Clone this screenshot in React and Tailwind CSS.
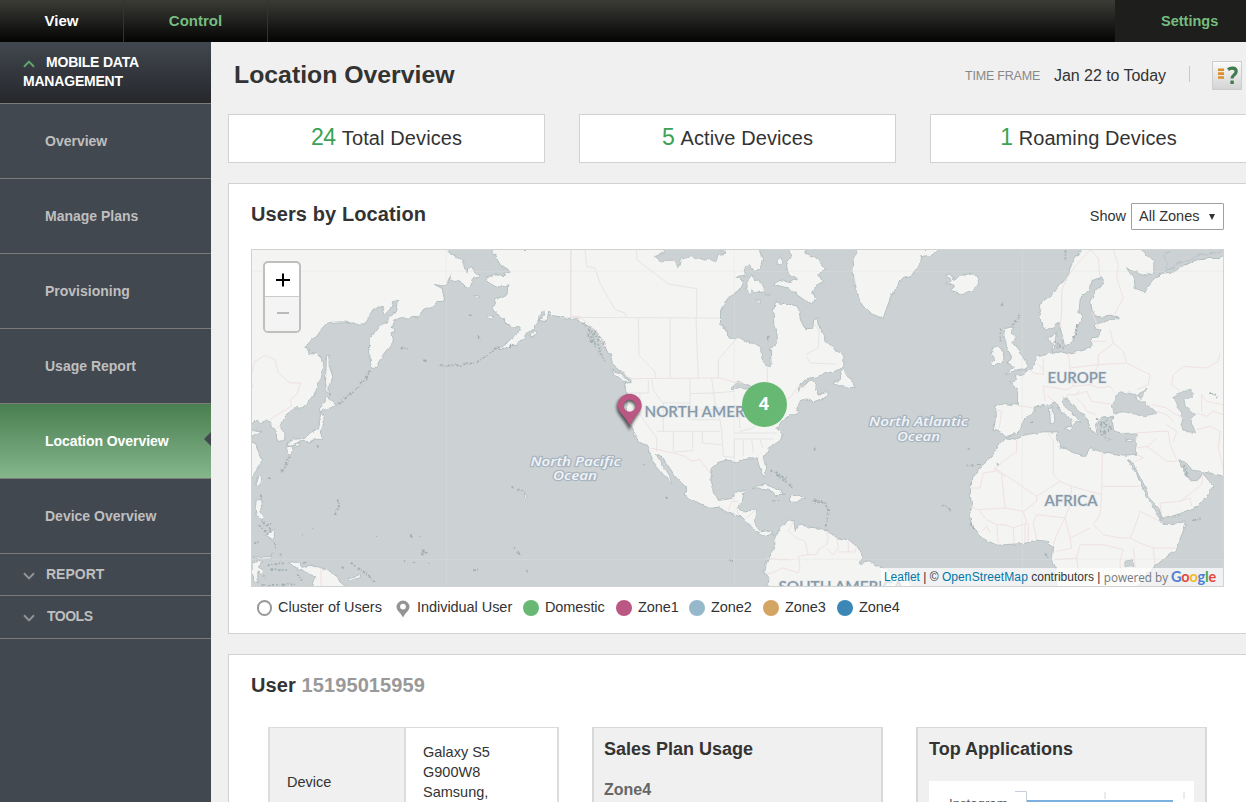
import React from "react";

const NAV = ["Overview", "Manage Plans", "Provisioning", "Usage Report", "Location Overview", "Device Overview"];

const STATS = [
  { n: "24", label: "Total Devices" },
  { n: "5", label: "Active Devices" },
  { n: "1", label: "Roaming Devices" },
];

const LEGEND = [
  { label: "Domestic", dot: "bg-[#67b873]", width: "w-[93px]" },
  { label: "Zone1", dot: "bg-[#ba5783]", width: "w-[73px]" },
  { label: "Zone2", dot: "bg-[#95b8ca]", width: "w-[74px]" },
  { label: "Zone3", dot: "bg-[#d4a463]", width: "w-[74px]" },
  { label: "Zone4", dot: "bg-[#3b87b5]", width: "w-[74px]" },
];

const ASIA = [
  "M-5 0L590 0L610 20L632 35L640 48L643 60L650 70L652 58L668 60L672 70L685 85L668 92L665 105L655 118L640 110L632 98L620 96L600 95L598 78L596 95L590 108L575 112L552 108L575 120L583 158L560 160L548 172L530 180L500 205L490 203L475 208L455 208L445 210L432 215L425 235L430 245L422 260L428 280L413 300L400 315L388 335L380 350L366 360L360 345L357 300L357 270L370 250L390 235L410 215L425 200L435 185L440 162L447 158L430 158L426 175L415 185L402 200L395 190L400 178L385 175L370 180L360 195L350 210L345 225L325 228L310 220L295 222L270 220L240 222L228 225L210 245L190 270L163 300L178 303L175 315L200 316L215 328L219 345L212 390L195 430L170 465L155 478L130 478L115 492L100 505L92 520L95 540L103 555L103 574L85 580L78 570L78 550L62 535L60 520L45 518L30 522L20 515L-5 535L-5 555L12 545L35 546L12 560L5 575L15 590L25 612L33 632L25 655L5 685L-5 690Z",
  "M228 322L235 320L236 350L247 385L240 400L235 415L237 440L228 425L225 400L226 370Z",
  "M226 443L240 455L258 468L245 478L225 482L208 490L207 480L220 465Z",
  "M212 492L220 505L221 520L213 545L213 572L195 573L180 580L150 578L120 590L107 588L118 580L130 572L165 570L180 555L200 540L205 520Z",
  "M110 592L125 590L128 605L118 620L108 600Z M130 588L150 583L146 595L135 597Z",
  "M22 684L32 686L28 708L20 716L15 702Z",
  "M18 754L33 753L36 775L28 790L42 808L32 812L18 800L14 780Z M52 850L74 845L75 865L68 878L57 870L45 862Z",
  "M5 925L60 925L70 915L58 932L20 932Z M5 945L25 938L35 943L20 955L35 965L45 987L30 980L22 970L22 1003L10 995L5 970Z",
  "M115 940L150 942L150 958L162 955L180 950L200 955L235 965L260 985L268 1000L290 1018L185 1018L195 985L175 978L160 968L145 965L130 955Z",
  "M290 990L310 988L330 973L325 988L300 998Z",
  "M668 138L690 140L688 147L675 146Z M710 207L720 200L730 206L722 213Z M835 262L850 245L857 255L845 265Z M818 738L828 738L830 746L820 745Z",
];

const AMERICAS = [
  "M-205 0L-202 12L-180 50L-150 70L-170 75L-165 82L-185 75L-222 90L-205 108L-185 115L-158 112L-160 135L-180 145L-195 155L-205 180L-195 195L-165 210L-165 230L-140 235L-120 232L-125 250L-145 272L-180 295L-195 305L-175 302L-130 285L-105 262L-80 240L-65 222L-60 195L-50 185L-48 200L-65 215L-45 220L-38 205L-35 190L-25 200L0 205L25 210L45 212L60 218L75 225L95 240L110 255L115 275L130 290L150 320L155 345L185 370L210 395L195 402L200 430L195 450L200 500L212 540L235 580L255 590L268 610L285 650L310 680L335 705L325 680L305 650L286 615L305 625L325 655L345 685L375 715L375 740L400 760L450 780L475 775L510 797L545 805L565 830L585 850L610 862L635 855L645 868L660 835L680 820L700 815L705 845L715 828L740 835L780 840L805 845L830 870L870 878L890 895L905 925L900 945L925 940L960 955L990 970L1013 1018L622 1018L625 990L610 970L615 940L635 915L645 900L640 862L630 845L600 850L585 830L580 815L588 785L550 787L530 780L545 760L553 722L525 730L515 750L480 755L460 735L450 700L455 660L475 642L500 635L530 640L560 628L590 628L600 665L612 685L618 665L608 625L625 600L660 575L665 560L650 540L665 520L690 500L718 490L705 480L720 460L750 450L755 465L780 455L808 432L790 430L775 440L765 420L770 408L745 395L710 432L720 405L745 388L770 386L790 376L820 370L850 355L850 322L820 300L795 280L785 250L768 205L760 215L755 240L735 240L720 215L715 180L690 165L665 165L645 160L638 190L640 230L650 260L648 285L630 300L632 355L618 350L605 335L600 300L575 285L535 268L502 265L498 240L480 230L480 190L490 165L510 140L535 128L545 112L550 95L525 85L555 80L550 60L565 50L580 70L600 60L606 30L600 0Z",
  "M680 0L692 25L678 50L682 70L708 92L690 103L655 95L640 108L680 118L700 132L725 150L755 170L765 150L755 125L785 102L775 75L797 65L770 30L735 15L740 0Z",
  "M570 78L582 90L608 112L615 130L590 132L575 125L570 140L555 125L562 100Z M650 28L665 25L667 45L650 48Z M585 155L597 150L595 165Z M612 140L625 138L622 145Z",
  "M820 405L835 395L840 370L850 358L858 382L875 395L882 420L866 420L850 412L835 412Z",
  "M575 717L610 708L640 718L675 738L648 738L618 722L590 718Z M690 742L715 740L735 750L710 758L690 758Z M635 756L658 757L645 762Z M757 758L775 758L772 764L758 764Z",
  "M895 0L875 40L880 90L890 130L905 170L930 195L968 210L978 180L990 150L1000 125L1025 90L1050 85L1075 50L1080 25L1110 20L1145 0Z",
  "M155 365L178 372L208 400L190 398L165 380Z",
];

const EUROPE = [
  "M165 82L180 75L192 95L205 85L225 80L245 73L268 92L262 110L245 125L218 138L195 130L180 125L192 110L168 105L187 95Z",
  "M305 300L325 296L340 308L336 340L305 352L300 342L312 330L303 318Z",
  "M343 240L370 235L362 255L378 262L365 282L380 300L395 320L410 345L408 362L372 368L348 376L372 355L350 345L362 335L362 315L348 298L345 275L340 260Z",
  "M575 0L545 45L525 90L495 130L455 160L445 190L455 235L470 245L495 230L503 225L515 260L522 292L548 280L555 250L575 210L565 190L570 150L600 120L605 95L630 88L640 105L615 125L600 155L605 190L620 205L660 200L688 208L650 217L612 228L612 240L630 245L625 262L605 265L600 295L580 305L530 315L505 308L485 315L485 290L475 270L500 245L495 270L492 300L470 318L440 325L430 350L400 375L378 380L380 395L355 403L380 420L385 440L383 470L345 466L312 472L318 495L308 545L330 550L345 565L375 555L395 535L400 515L430 490L432 475L470 470L490 460L515 490L545 520L545 540L535 550L520 542L548 530L558 520L572 518L540 490L520 470L515 445L530 450L560 485L585 500L590 520L605 550L620 560L615 530L640 505L670 503L665 520L670 548L700 555L740 553L735 618L700 620L640 610L600 600L590 625L550 612L510 595L497 570L500 550L460 550L410 558L375 572L340 568L325 590L305 625L270 655L240 700L240 745L245 780L235 800L245 830L275 870L320 890L400 885L440 875L465 878L490 895L485 930L495 960L500 1018L735 1018L790 955L860 900L888 820L825 828L805 805L770 745L725 650L710 635L728 648L748 690L780 755L805 780L817 812L870 795L910 778L940 755L970 715L940 678L920 695L905 697L885 675L865 635L880 635L905 665L940 670L1005 685L1005 15L985 30L930 30L880 50L850 70L810 75L785 100L770 118L765 130L735 120L730 90L705 55L760 80L790 70L790 40L745 0Z",
  "M477 480L488 478L490 520L480 528Z M705 575L728 570L722 580Z M640 568L662 572L645 575Z",
  "M0 1000L50 965L62 1018L0 1018Z",
];

const WATER = [
  { x: 930, d: "M310 0L312 15L282 25L300 40L345 38L352 58L362 30L380 32L395 22L410 30L432 38L448 33L465 40L470 18L495 15L470 0Z" },
  { x: 930, d: "M510 420L535 398L570 412L575 425L545 420Z M580 430L590 480L600 440L620 430Z" },
  { x: 1920, d: "M670 495L665 470L690 430L735 438L740 455L765 465L798 495L760 502L700 490Z M735 438L770 422L752 450Z" },
  { x: 1920, d: "M850 445L870 430L905 425L905 445L880 450L885 475L915 498L900 515L915 552L875 548L870 530L880 515L865 480Z" },
  { x: 1920, d: "M820 20L832 40L830 65L850 60L860 45L900 35L920 20L985 12L1005 0L845 0Z" },
  { x: 1920, d: "M702 940L725 932L728 950L705 955Z" },
  { x: 1920, d: "M712 632L728 646L750 690L782 755L803 778L812 815L800 800L768 745L740 680Z" },
];

const STATES = [
  "M32 5L32 205M0 208L480 210M75 5L80 55L105 60L120 105L165 185L195 195L200 210M230 5L230 35L325 108L410 122L410 210M235 210L237 322L285 372L288 392M330 210L330 392M408 210L415 392M532 268L475 335L475 392M622 355L622 430",
  "M210 435L265 435L265 395M195 500L240 500L290 570L290 610M240 435L240 500M275 392L280 425L300 455L310 465L390 465M390 392L390 515M390 437L460 435M390 485L460 485M310 465L310 550M340 550L340 610M290 550L480 550M395 515L480 515L485 550M427 550L427 585L485 590M398 550L398 608L340 612M455 392L465 465L480 515M460 435L525 430M470 480L535 480M485 550L490 625L520 628M523 573L523 635M525 573L640 573M550 573L550 625M575 573L580 615M600 573L608 600M523 555L650 555M535 480L540 540M600 500L580 540L540 550M738 320L775 298L778 250L765 230M740 325L750 345L830 348",
];
const PINK_AM = [
  "M205 392L480 390L520 402L550 405M660 460L690 450L715 415L735 420M270 600L340 615L375 625L395 640L420 635L450 675M32 205L60 205L80 225L105 245L125 270L140 300M505 790L515 760L535 760M560 810L588 785M530 780L535 800",
  "M700 820L685 850L710 870L735 880L745 920L715 925L720 960L715 975L670 960L635 975L615 978M620 930L655 935L690 935M800 850L805 870L800 890L775 905L770 920L745 920M830 870L835 900L820 920L800 900M865 880L865 912L835 912M890 895L885 912L865 912",
];
const PINK_AS = "M5 375L15 340L45 322L75 335L85 375L120 405L152 405L140 440L120 455L125 475L90 495L60 515M0 395L10 420M80 538L95 532M213 960L213 1018M963 5L963 205L990 212";
const PINK_EU = [
  "M600 5L560 50L530 90L515 130L515 190L510 240M600 5L625 30L630 88M670 5L685 50L680 90L700 150L670 205M660 245L670 285L640 310L625 320L625 350L540 360L535 315M605 280L650 280M670 285L700 310L710 345L780 380L775 410L740 425M625 350L710 345M460 330L460 380L430 375L415 360M445 350L460 365M460 415L490 418L530 425L550 415L600 410L625 420L660 415L680 440M460 415L465 460M490 460L470 440M530 440L560 440L590 430L605 460L640 465L670 470M560 450L580 470L590 490L620 500M555 440L570 430M600 410L625 350M318 485L335 490L328 540M383 472L430 480M605 190L625 240M540 360L550 415",
  "M785 470L830 480L850 495M800 490L830 500L850 520M850 495L880 510M830 530L860 550L850 580M740 555L810 550L835 550M740 600L770 595L830 640L860 640M740 620L760 630L735 640M800 570L770 600M835 550L840 590L860 635M850 380L880 355L950 360L985 340L990 315M850 380L845 410L870 430M935 490L935 440L950 460L1000 470M920 545L960 535L990 550L985 600L1000 660M920 495L950 505L970 490L1000 500M810 765L870 760L935 710L940 680M810 765L815 800M870 760L900 750L905 775",
  "M380 575L380 610L315 660L315 670L280 675L270 720L240 720M315 660L440 745L440 760L400 790L345 780M335 680L345 780L265 785L240 775M315 665L345 685M475 555L490 580L490 680L510 700L440 745M510 700L545 715L635 740L637 610M637 715L750 715M545 715L540 770L525 810L440 800L430 825M635 740L630 800L610 830L640 860L690 870L720 870L750 885L790 900L860 900M540 870L600 840M750 790L730 850L720 870M750 790L820 825M430 825L440 875M345 830L370 840L410 825L400 790M370 840L372 885M405 825L405 885M415 825L415 880M320 830L325 885M265 785L290 815L320 830L345 830M540 870L545 900L500 910M495 935L560 930L570 890L640 890L700 905L690 940L695 1013M560 930L570 1013M790 900L795 950M730 900L735 955L760 985M580 990L640 985L650 1013M525 810L540 870M275 850L290 835L300 855M525 810L500 860L490 890",
];

const SPECKS = [
  "M262 465L300 435L330 410L345 390L360 365",
  "M570 350L610 352L660 345L700 330L730 305L790 290",
  "M450 295L475 302M518 335L528 338M655 200L665 203M680 262L690 270",
  "M120 625L95 665M95 665L85 668M60 688L50 692M28 735L30 750M200 590L203 598M262 750L262 780L252 802M30 815L50 830L65 825M25 830L45 850M40 820L62 845L50 855M10 885L25 880M70 885L75 905M90 912L92 935M60 965L115 965M50 950L100 945M140 975L155 995M30 1010L140 1008M300 945L330 962L380 1005M275 955L280 955M160 945L170 940M240 435L235 440",
  "M475 863L485 863M505 865L512 866M515 905L525 910L528 920M515 912L522 922M460 938L464 938M488 938L490 940M535 942L538 944M668 965L682 965M828 968L832 970M788 897L792 901M802 912L812 920M780 715L790 718M800 722L815 728L820 735M378 865L380 867M185 842L188 840M155 860L157 860",
  "M1000 220L1040 275L1050 310L1060 340M1015 240L1035 300M1030 250L1060 280L1070 310M1012 255L1028 285M1560 665L1580 680L1625 715M1575 670L1610 695M1690 603L1700 604M1700 760L1725 765L1732 800L1725 835M1690 755L1730 765M1435 938L1455 942M1248 745L1254 750M1555 260L1552 280M1180 645L1182 650",
  "M2243 650L2235 640M2190 650L2182 648M2170 652L2145 648M2155 600L2158 602M2075 770L2100 785M2250 165L2255 175M2305 195L2285 235M2250 240L2250 280M2540 510L2580 540L2555 560M2545 530L2575 510M2560 520L2565 565M2548 520L2555 550M2410 280L2440 300M2425 285L2420 300M2480 230L2470 270M2340 520L2350 518M2880 430L2900 445M2800 650L2815 685M2825 815L2850 812M2385 915L2395 935M2160 825L2170 840M2445 5L2445 40",
];

function WorldMap() {
  const land = { fill: "#f4f4f2", stroke: "#b2bdbf", strokeWidth: 2.8, strokeLinejoin: "round" };
  return (
    <svg className="block h-full w-full" viewBox="252 250 971 336" preserveAspectRatio="none">
      <defs>
        <filter id="coast" filterUnits="userSpaceOnUse" x="240" y="240" width="1000" height="360">
          <feTurbulence type="fractalNoise" baseFrequency=".14" numOctaves="2" seed="4" />
          <feDisplacementMap in="SourceGraphic" scale="5" xChannelSelector="R" yChannelSelector="G" />
        </filter>
      </defs>
      <rect x="252" y="250" width="971" height="336" fill="#ccd1d3" />
      <g filter="url(#coast)">
        <g transform="translate(250.500 248.500) scale(.33333)">
          {ASIA.map((d, i) => <path key={i} d={d} {...land} />)}
          <path d="M-20 -10H590L560 6H-20Z" fill="#f4f4f2" />
          <g transform="translate(930 0)">{AMERICAS.map((d, i) => <path key={i} d={d} {...land} />)}</g>
          <g transform="translate(1920 0)">{EUROPE.map((d, i) => <path key={i} d={d} {...land} />)}</g>
          {WATER.map((w, i) => (
            <path key={i} d={w.d} transform={`translate(${w.x} 0)`} fill="#ccd1d3" stroke="#b4bfc1" strokeWidth="2.4" />
          ))}
          <g fill="none" stroke="#a3b0b2" strokeWidth="5.5" strokeDasharray="8 4 4 6">{SPECKS.map((d, i) => <path key={i} d={d} />)}</g>
        </g>
      </g>
      <g transform="translate(250 248) scale(.33333)" fill="none" strokeLinejoin="round">
        <g stroke="#e0e1e2" strokeWidth="2.4" transform="translate(930 0)">{STATES.map((d, i) => <path key={i} d={d} />)}</g>
        <g stroke="#efdde0" strokeWidth="2.6">
          <path d={PINK_AS} />
          <g transform="translate(930 0)">{PINK_AM.map((d, i) => <path key={i} d={d} />)}</g>
          <g transform="translate(1920 0)">{PINK_EU.map((d, i) => <path key={i} d={d} />)}</g>
        </g>
        <path d="M0 70H2920M0 934H2920M589 0V1020M1453 0V1020M2317 0V1020" stroke="#e0e3e3" strokeOpacity=".4" strokeWidth="2.5" />
      </g>
      <g fontFamily="Lato, sans-serif" fontWeight="600" fontSize="16" fill="#8798a7" stroke="#e3e8eb" strokeWidth="1.6" paintOrder="stroke">
        <text x="644.5" y="416.5" textLength="125" lengthAdjust="spacingAndGlyphs">NORTH AMERICA</text>
        <text x="1047.5" y="383" textLength="59" lengthAdjust="spacingAndGlyphs">EUROPE</text>
        <text x="1044.5" y="506" textLength="53" lengthAdjust="spacingAndGlyphs">AFRICA</text>
        <text x="778.5" y="592" textLength="125" lengthAdjust="spacingAndGlyphs">SOUTH AMERICA</text>
      </g>
      <g fontFamily="'Open Sans', sans-serif" fontWeight="600" fontStyle="italic" fontSize="12.5" fill="#f1f4f6" stroke="#a9b6c2" strokeWidth="2.4" strokeLinejoin="round" paintOrder="stroke">
        <text x="530.5" y="465.5" textLength="90" lengthAdjust="spacingAndGlyphs">North Pacific</text>
        <text x="553" y="480" textLength="44" lengthAdjust="spacingAndGlyphs">Ocean</text>
        <text x="869" y="426" textLength="99" lengthAdjust="spacingAndGlyphs">North Atlantic</text>
        <text x="897" y="440.5" textLength="43" lengthAdjust="spacingAndGlyphs">Ocean</text>
      </g>
    </svg>
  );
}

function Chevron({ up }) {
  return (
    <svg className="h-[8px] w-[12px] shrink-0" viewBox="0 0 12 8" fill="none" stroke={up ? "#5fa56c" : "#8f9396"} strokeWidth="2">
      <path d={up ? "M1 6.8L6 1.6L11 6.8" : "M1 1.2L6 6.4L11 1.2"} />
    </svg>
  );
}

function TopBar() {
  return (
    <header className="flex h-[42px] shrink-0 bg-linear-to-b from-[#3b3b36] via-[#20201e] to-[#050505] text-[15px] leading-[42px] font-bold">
      <div className="w-[124px] border-r border-[#333331] text-center text-white">View</div>
      <div className="w-[144px] border-r border-[#333331] text-center text-[#75bd80]">Control</div>
      <div className="ml-auto w-[131px] bg-[#1e1e1c] pl-[46px] text-[14.5px] text-[#75bd80]">Settings</div>
    </header>
  );
}

function Sidebar() {
  return (
    <aside className="w-[211px] shrink-0 bg-[#424850] text-[14px] font-bold text-[#bfbfbf]">
      <div className="h-[62px] border-b border-[#7b7b79] bg-linear-to-b from-[#424850] to-[#25272b] pt-[11px] pl-[23px] leading-[19px] text-white">
        <div className="flex items-center gap-[11px]">
          <span className="pt-[3px]"><Chevron up /></span>
          <span className="tracking-[-0.2px]">MOBILE DATA</span>
        </div>
        <div className="tracking-[-0.2px]">MANAGEMENT</div>
      </div>
      {NAV.map((n) =>
        n === "Location Overview" ? (
          <div key={n} className="flex h-[75px] items-center justify-between border-b border-[#7b7b79] bg-linear-to-b from-[#4a7f51] to-[#85b68c] pl-[45px] text-white">
            <span className="tracking-[-0.05px]">{n}</span>
            <svg className="-mt-[5px] h-[14px] w-[7px]" viewBox="0 0 7 14"><path d="M7 0L0 7L7 14Z" fill="#424850" /></svg>
          </div>
        ) : (
          <div key={n} className="flex h-[75px] items-center border-b border-[#7b7b79] pl-[45px]">{n}</div>
        )
      )}
      <div className="flex h-[42px] items-center gap-[11px] border-b border-[#7b7b79] pl-[23px]">
        <span className="pt-[2px]"><Chevron /></span>REPORT
      </div>
      <div className="flex h-[43px] items-center gap-[12px] border-b border-[#7b7b79] pb-px pl-[23px]">
        <span className="pt-[2px]"><Chevron /></span><span className="tracking-[-0.5px]">TOOLS</span>
      </div>
    </aside>
  );
}

function HelpButton() {
  return (
    <div className="h-[29px] w-[30px] border border-[#cdcdcd] bg-linear-to-b from-[#fafafa] to-[#d4d4d4]">
      <svg className="block h-[28px] w-[28px]" viewBox="0 0 28 28">
        <path d="M5 7.700H11M5 11.600H11M5 15.500H11" stroke="#dc8f2c" strokeWidth="2.600" />
        <path d="M15 7.600C16.200 6.700 17.800 6.200 19.300 6.200C21.900 6.200 23.200 7.400 23.200 9.500C23.200 12.900 19 12.900 19 16.500" fill="none" stroke="#3f7b4e" strokeWidth="3.200" />
        <rect x="17.400" y="18.600" width="3.400" height="3.400" rx=".6" fill="#3f7b4e" />
      </svg>
    </div>
  );
}

function MapPanel() {
  return (
    <section className="mt-[20px] h-[451px] border border-[#d2d2d2] bg-white pl-[22px]">
      <div className="flex h-[65px] w-[973px] items-start justify-between pt-[19px]">
        <h2 className="text-[20px] leading-[23px] font-bold tracking-[0.1px]">Users by Location</h2>
        <div className="flex items-center gap-[5px] text-[14.5px]">
          <span>Show</span>
          <div className="flex h-[27px] w-[93px] items-center justify-between rounded-[1px] border border-[#a0a0a0] bg-white pr-[8px] pl-[7px]">
            <span>All Zones</span>
            <svg className="h-[6px] w-[6px]" viewBox="0 0 6 6"><path d="M0 0H6L3 6Z" fill="#333" /></svg>
          </div>
        </div>
      </div>
      <div className="relative h-[338px] w-[973px] overflow-hidden border border-[#d0d3d2]">
        <WorldMap />
        <div className="absolute top-[11px] left-[11px] w-[38px] overflow-hidden rounded-[5px] border-2 border-[#bfbfbd] bg-white">
          <div className="flex h-[34px] items-center justify-center border-b border-[#ccc] pl-[2px]">
            <svg className="h-[14px] w-[14px]" viewBox="0 0 14 14"><path d="M0 7H14M7 0.500V13.500" stroke="#000" strokeWidth="2" /></svg>
          </div>
          <div className="flex h-[34px] items-center justify-center bg-[#f4f4f4] pb-[2px] pl-px">
            <svg className="h-[2px] w-[12px]" viewBox="0 0 12 2"><path d="M0 1H12" stroke="#b9b9b9" strokeWidth="2" /></svg>
          </div>
        </div>
        <svg className="absolute top-[140px] left-[358px] h-[48px] w-[40px]" viewBox="0 0 40 48">
          <path fillRule="evenodd" d="M18.500 5.500a12 12 0 0 1 12 12c0 7-8 12-11 23c-5-11-13-16-13-23a12 12 0 0 1 12-12zM19 12a6 6 0 1 0 0 12a6 6 0 0 0 0-12z" fill="#333" opacity=".8" className="blur-[1.500px]" />
          <path fillRule="evenodd" d="M19.700 3.800a12 12 0 0 1 12 12c0 6.500-8.500 11-12 20c-3.500-9-12-13.500-12-20a12 12 0 0 1 12-12zM19.700 9.800a6 6 0 1 0 0 12a6 6 0 0 0 0-12z" fill="#ba5783" />
        </svg>
        <div className="absolute top-[132px] left-[490px] flex h-[45px] w-[45px] items-center justify-center rounded-full bg-[#67b873] pr-px pb-[2px] font-['Open_Sans',sans-serif] text-[18px] font-bold text-white">4</div>
        <div className="absolute right-0 bottom-0 flex h-[18px] items-center bg-white/70 pr-[7px] pl-[3px] text-[12px] whitespace-pre">
          <span className="text-[#0078a8]">Leaflet</span>
          <span> | © </span>
          <span className="tracking-[0.1px] text-[#0078a8]">OpenStreetMap</span>
          <span> contributors | </span>
          <span className="pt-px font-['Open_Sans',sans-serif] text-[11.700px] text-[#75797c]">powered by </span>
          <span className="font-['Lato',sans-serif] text-[14.500px] font-bold tracking-[-0.200px]">
            <span className="text-[#4f7fd0]">G</span><span className="text-[#e34a3d]">o</span><span className="text-[#f3bc22]">o</span><span className="text-[#4f7fd0]">g</span><span className="text-[#40a65a]">l</span><span className="text-[#e34a3d]">e</span>
          </span>
        </div>
      </div>
      <div className="flex h-[41px] items-center pl-[6px] text-[14.500px]">
        <span className="h-[16px] w-[15px] rounded-full border-2 border-[#999]" />
        <span className="mt-px ml-[6px] w-[104px] whitespace-nowrap">Cluster of Users</span>
        <svg className="mt-[2px] ml-[14px] h-[18px] w-[14px]" viewBox="0 0 14 18">
          <path fillRule="evenodd" d="M7 0.500a6.500 6.500 0 0 1 6.500 6.500c0 3.500-4.500 6-6.500 10.500c-2-4.500-6.500-7-6.500-10.500a6.500 6.500 0 0 1 6.500-6.500zM7 3.700a2.900 2.900 0 1 0 0 5.800a2.900 2.900 0 0 0 0-5.800z" fill="#949494" />
        </svg>
        <span className="mt-px ml-[7px] w-[106px] tracking-[-0.050px] whitespace-nowrap">Individual User</span>
        {LEGEND.map((l) => (
          <div key={l.label} className={`flex items-center ${l.width}`}>
            <span className={`h-[16px] w-[16px] shrink-0 rounded-full ${l.dot}`} />
            <span className="mt-px ml-[6px] tracking-[-0.100px]">{l.label}</span>
          </div>
        ))}
      </div>
    </section>
  );
}

function UserPanel() {
  return (
    <section className="mt-[20px] h-[220px] border border-[#d2d2d2] bg-white pl-[22px]">
      <h2 className="pt-[19px] text-[20px] leading-[23px] font-bold tracking-[0.1px]">
        User <span className="text-[#999]">15195015959</span>
      </h2>
      <div className="mt-[30px] ml-[17px] flex gap-[33px]">
        <div className="flex h-[140px] w-[291px] border-2 border-t border-[#dcdcdc] text-[14.5px]">
          <div className="w-[136px] border-r-2 border-[#dcdcdc] bg-[#f0f0f0] pt-[44px] pl-[17px]">Device</div>
          <div className="pt-[14px] pl-[17px] leading-[20px]">
            <div>Galaxy S5</div>
            <div>G900W8</div>
            <div>Samsung,</div>
          </div>
        </div>
        <div className="h-[140px] w-[291px] border-2 border-t border-[#d8d8d8] bg-[#f0f0f0] pt-[10px] pl-[10px] font-bold">
          <div className="text-[18px] leading-[22px]">Sales Plan Usage</div>
          <div className="mt-[20px] text-[16px] leading-[20px] text-[#666]">Zone4</div>
        </div>
        <div className="h-[140px] w-[291px] border-2 border-t border-[#d8d8d8] bg-[#f0f0f0] pt-[10px] pl-[11px]">
          <div className="text-[18px] leading-[22px] font-bold">Top Applications</div>
          <div className="mt-[21px] flex w-[265px] bg-white pt-[10px]">
            <div className="w-[86px] pt-[5px] pl-[20px] text-[13.200px] leading-[16px] text-[#555]">Instagram</div>
            <svg className="h-[20px] w-[179px]" viewBox="0 0 179 20">
              <path d="M0 .5H11.500V20" fill="none" stroke="#c5cfdc" />
              <path d="M90 1V8M169 1V8" stroke="#d8d8d8" />
              <rect x="12" y="9" width="146" height="11" fill="#7cb0e0" />
            </svg>
          </div>
        </div>
      </div>
    </section>
  );
}

export default function App() {
  return (
    <div className="flex h-[802px] w-[1246px] flex-col overflow-hidden bg-[#f0f0f0] font-['Liberation_Sans',Arial,sans-serif] text-[#333]">
      <TopBar />
      <div className="flex min-h-0 flex-1">
        <Sidebar />
        <main className="min-w-0 flex-1 overflow-hidden pl-[17px]">
          <div className="flex h-[72px] items-start pt-[18px] pl-[6px]">
            <h1 className="text-[24.800px] leading-[30px] font-bold">Location Overview</h1>
            <div className="mt-px mr-[4px] ml-auto flex items-center">
              <span className="mt-[2px] text-[12.500px] tracking-[-0.200px] text-[#888]">TIME FRAME</span>
              <span className="ml-[14px] text-[16px] tracking-[-0.050px]">Jan 22 to Today</span>
              <span className="-mt-[3px] mr-[22px] ml-[23px] h-[16px] w-px bg-[#c8c8c8]" />
              <HelpButton />
            </div>
          </div>
          <div className="w-[1053px]">
            <div className="flex gap-[34px]">
              {STATS.map((s) => (
                <div key={s.n} className="flex h-[49px] w-[317px] shrink-0 items-baseline justify-center gap-[6px] border border-[#d2d2d2] bg-white text-[20px] leading-[44px]">
                  <span className="text-[23px] tracking-[-0.300px] text-[#3aa356]">{s.n}</span>
                  <span className="tracking-[0.100px]">{s.label}</span>
                </div>
              ))}
            </div>
            <MapPanel />
            <UserPanel />
          </div>
        </main>
      </div>
    </div>
  );
}
